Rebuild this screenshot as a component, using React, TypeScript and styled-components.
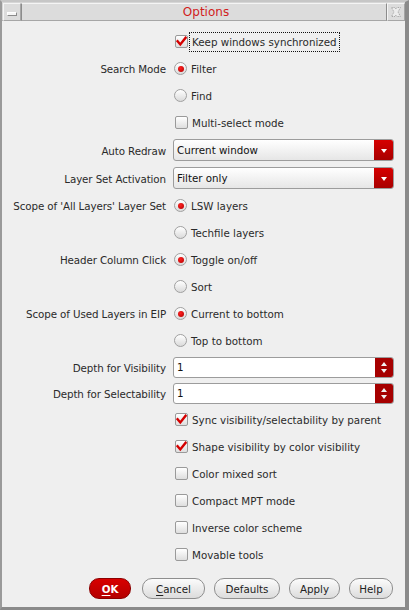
import React from "react";
import styled, { createGlobalStyle } from "styled-components";

const Global = createGlobalStyle`
  html, body { margin: 0; padding: 0; background: #efefef; }
  body { font-family: "DejaVu Sans", "Liberation Sans", sans-serif; }
  * { box-sizing: border-box; }
`;

const Window = styled.div`
  width: 409px;
  height: 610px;
  background: #efefef;
  border-left: 2px solid #9a9a9a;
  border-top: 2px solid #c6c6c6;
  border-right: 4px solid #8a8a8a;
  border-bottom: 3px solid #8a8a8a;
  display: flex;
  flex-direction: column;
`;

const TitleBar = styled.div`
  height: 19px;
  display: flex;
  background: #d6d6d6;
  padding: 1px 0 0 1px;
  border-bottom: 1px solid #b4b4b4;
`;

const TitleButton = styled.div`
  width: 18px;
  height: 18px;
  background: #dcdcdc;
  border: 1px solid #a6a6a6;
  border-top-color: #f4f4f4;
  border-left-color: #f4f4f4;
  display: flex;
  align-items: center;
  justify-content: center;
`;

const TitleArea = styled.div`
  flex: 1;
  height: 18px;
  background: #dcdcdc;
  border: 1px solid #a6a6a6;
  border-top-color: #f4f4f4;
  border-left-color: #8c8c8c;
  border-right-color: #8c8c8c;
  display: flex;
  align-items: center;
  justify-content: center;
  color: #d11d1d;
  font-size: 12px;
  padding-left: 4px;
`;

const MinBar = styled.div`
  width: 10px;
  height: 4px;
  background: #f6f6f6;
  border: 1px solid #8a8a8a;
  border-top-color: #ffffff;
  border-left-color: #ffffff;
  margin-top: 3px;
`;

const Body = styled.div`
  flex: 1;
  display: grid;
  grid-template-columns: 164px 1fr;
  grid-template-rows: repeat(4, 27px) 28px 28px repeat(6, 27px) 26px 26px repeat(6, 27px);
  column-gap: 7px;
  padding: 7px 11px 0 0;
  align-content: start;
  font-size: 10.3px;
  color: #2a2a2a;
`;

const Label = styled.div`
  grid-column: 1;
  display: flex;
  align-items: center;
  justify-content: flex-end;
  white-space: nowrap;
  padding-top: 1px;
  letter-spacing: -0.1px;
`;

const Cell = styled.div`
  grid-column: 2;
  display: flex;
  align-items: center;
  min-width: 0;
`;

const Option = styled.div`
  display: flex;
  align-items: center;
  white-space: nowrap;
  padding: 2px 2px 2px 0;
`;

const OptionText = styled.span<{ $focus?: boolean }>`
  margin-left: ${(p) => (p.$focus ? "1px" : "4px")};
  padding: ${(p) => (p.$focus ? "3px 2px 3px 2px" : "3px 0")};
  border: ${(p) => (p.$focus ? "1px dotted #111" : "none")};
  border-radius: 1px;
`;

const Box = styled.span`
  width: 13px;
  height: 13px;
  margin-left: 2px;
  border: 1px solid #9a9a9a;
  border-radius: 2px;
  background: linear-gradient(#ffffff, #dedede);
  display: flex;
  align-items: center;
  justify-content: center;
  flex: none;
`;

const Round = styled.span<{ $on?: boolean }>`
  width: 13px;
  height: 13px;
  margin-left: 1px;
  border: 1px solid #a0a0a0;
  border-radius: 50%;
  background: linear-gradient(#ffffff, #dadada);
  display: flex;
  align-items: center;
  justify-content: center;
  flex: none;
  &::after {
    content: "";
    display: ${(p) => (p.$on ? "block" : "none")};
    width: 6px;
    height: 6px;
    border-radius: 50%;
    background: radial-gradient(circle at 40% 35%, #ff2020, #b00000);
  }
`;

const Combo = styled.div`
  width: 222px;
  height: 22px;
  display: flex;
  border: 1px solid #9c9c9c;
  border-radius: 3px;
  background: linear-gradient(#ffffff, #e6e6e6);
  overflow: hidden;
`;

const ComboText = styled.div`
  flex: 1;
  display: flex;
  align-items: center;
  padding-left: 3px;
  color: #111;
`;

const ComboArrow = styled.div`
  width: 19px;
  background: linear-gradient(#d60000, #a80000);
  display: flex;
  align-items: center;
  justify-content: center;
  &::after {
    content: "";
    border-left: 3.5px solid transparent;
    border-right: 3.5px solid transparent;
    border-top: 4px solid #ffffff;
    margin-top: 1px;
  }
`;

const Spin = styled.div`
  width: 222px;
  height: 21px;
  display: flex;
  border: 1px solid #9c9c9c;
  border-radius: 3px;
  background: #ffffff;
  overflow: hidden;
`;

const SpinButtons = styled.div`
  width: 18px;
  background: #a60000;
  display: flex;
  flex-direction: column;
  align-items: center;
  justify-content: center;
  gap: 3px;
`;

const Tri = styled.span<{ $up?: boolean }>`
  width: 0;
  height: 0;
  border-left: 3.5px solid transparent;
  border-right: 3.5px solid transparent;
  ${(p) =>
    p.$up
      ? "border-bottom: 4px solid #f2f2f2;"
      : "border-top: 4px solid #f2f2f2;"}
`;

const Footer = styled.div`
  display: flex;
  justify-content: flex-end;
  gap: 9px;
  padding: 5px 12px 0 0;
  height: 34px;
`;

const Button = styled.div<{ $w: number; $primary?: boolean }>`
  width: ${(p) => p.$w}px;
  height: 21px;
  border-radius: 10px;
  display: flex;
  align-items: center;
  justify-content: center;
  font-size: 10.3px;
  border: 1px solid ${(p) => (p.$primary ? "#8c0000" : "#8e8e8e")};
  background: ${(p) =>
    p.$primary
      ? "linear-gradient(#d80000, #b40000)"
      : "linear-gradient(#fbfbfb, #dcdcdc)"};
  color: ${(p) => (p.$primary ? "#ffffff" : "#222")};
  font-weight: ${(p) => (p.$primary ? "bold" : "normal")};
  margin-right: ${(p) => (p.$primary ? "2px" : "0")};
  u { text-decoration: underline; text-underline-offset: 2px; }
`;

const Check = () => (
  <svg width="11" height="11" viewBox="0 0 11 11">
    <path d="M1.6 5.2 L4.3 8.4 L9.6 1.8" fill="none" stroke="#d40000" strokeWidth="2.4" strokeLinecap="square" strokeLinejoin="miter" />
  </svg>
);

const CloseIcon = () => (
  <svg width="12" height="12" viewBox="0 0 12 12">
    <path d="M1.5 1.5 L5 1.5 L6 3 L7 1.5 L10.5 1.5 L8 6 L10.5 10.5 L7 10.5 L6 9 L5 10.5 L1.5 10.5 L4 6 Z" fill="#ececec" stroke="#a8a8a8" strokeWidth="1" strokeDasharray="1.2 0.8" />
  </svg>
);

const CheckBox = ({ on, text, focus }: { on?: boolean; text: string; focus?: boolean }) => (
  <Option>
    <Box>{on && <Check />}</Box>
    <OptionText $focus={focus}>{text}</OptionText>
  </Option>
);

const Radio = ({ on, text }: { on?: boolean; text: string }) => (
  <Option>
    <Round $on={on} />
    <OptionText>{text}</OptionText>
  </Option>
);

type Row = { label?: string; control: React.ReactNode };

const rows: Row[] = [
  { control: <CheckBox on focus text="Keep windows synchronized" /> },
  { label: "Search Mode", control: <Radio on text="Filter" /> },
  { control: <Radio text="Find" /> },
  { control: <CheckBox text="Multi-select mode" /> },
  {
    label: "Auto Redraw",
    control: (
      <Combo>
        <ComboText>Current window</ComboText>
        <ComboArrow />
      </Combo>
    ),
  },
  {
    label: "Layer Set Activation",
    control: (
      <Combo>
        <ComboText>Filter only</ComboText>
        <ComboArrow />
      </Combo>
    ),
  },
  { label: "Scope of 'All Layers' Layer Set", control: <Radio on text="LSW layers" /> },
  { control: <Radio text="Techfile layers" /> },
  { label: "Header Column Click", control: <Radio on text="Toggle on/off" /> },
  { control: <Radio text="Sort" /> },
  { label: "Scope of Used Layers in EIP", control: <Radio on text="Current to bottom" /> },
  { control: <Radio text="Top to bottom" /> },
  {
    label: "Depth for Visibility",
    control: (
      <Spin>
        <ComboText>1</ComboText>
        <SpinButtons>
          <Tri $up />
          <Tri />
        </SpinButtons>
      </Spin>
    ),
  },
  {
    label: "Depth for Selectability",
    control: (
      <Spin>
        <ComboText>1</ComboText>
        <SpinButtons>
          <Tri $up />
          <Tri />
        </SpinButtons>
      </Spin>
    ),
  },
  { control: <CheckBox on text="Sync visibility/selectability by parent" /> },
  { control: <CheckBox on text="Shape visibility by color visibility" /> },
  { control: <CheckBox text="Color mixed sort" /> },
  { control: <CheckBox text="Compact MPT mode" /> },
  { control: <CheckBox text="Inverse color scheme" /> },
  { control: <CheckBox text="Movable tools" /> },
];

export default function App() {
  return (
    <>
      <Global />
      <Window>
        <TitleBar>
          <TitleButton>
            <MinBar />
          </TitleButton>
          <TitleArea>Options</TitleArea>
          <TitleButton>
            <CloseIcon />
          </TitleButton>
        </TitleBar>
        <Body>
          {rows.map((r, i) => (
            <React.Fragment key={i}>
              {r.label && <Label style={{ gridRow: i + 1 }}>{r.label}</Label>}
              <Cell style={{ gridRow: i + 1 }}>{r.control}</Cell>
            </React.Fragment>
          ))}
        </Body>
        <Footer>
          <Button $w={42} $primary>
            <span><u>O</u>K</span>
          </Button>
          <Button $w={63}>
            <span><u>C</u>ancel</span>
          </Button>
          <Button $w={66}>Defaults</Button>
          <Button $w={51}>Apply</Button>
          <Button $w={44}>Help</Button>
        </Footer>
      </Window>
    </>
  );
}
